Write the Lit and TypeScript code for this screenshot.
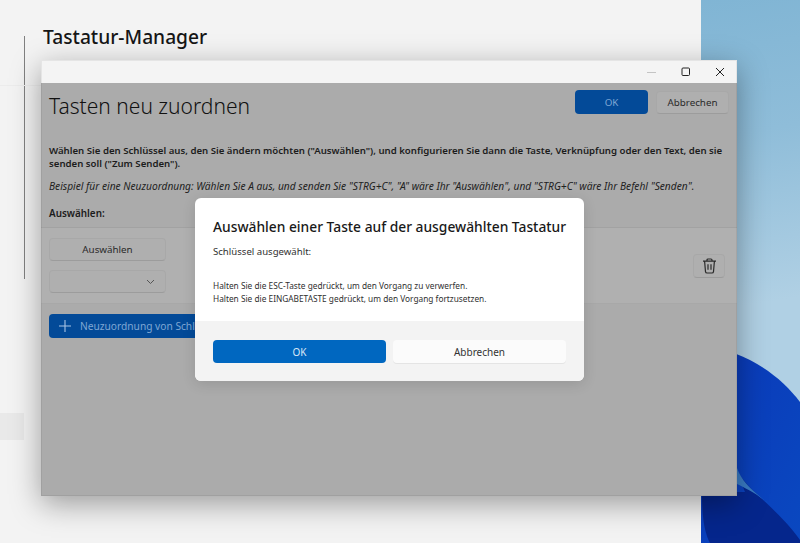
import { LitElement, html, css, svg } from "lit";
import { customElement } from "lit/decorators.js";

@customElement("app-root")
export class AppRoot extends LitElement {
  static styles = css`
    :host { display: block; width: 800px; height: 543px; position: relative; overflow: hidden; font-family: "Noto Sans", "Open Sans", sans-serif; color: #1b1b1b; }
    .wallpaper { position: absolute; inset: 0; width: 800px; height: 543px; display: block; }
    .settings { position: absolute; left: 0; top: 0; width: 701px; height: 543px; background: #f3f3f3; }
    .settings h2 { position: absolute; left: 43px; top: 23px; margin: 0; font-size: 19.2px; line-height: 28px; font-weight: 500; color: #161616; white-space: nowrap; }
    .rail { position: absolute; left: 23.5px; top: 36px; width: 1.5px; height: 243px; background: #808080; }
    .sep { position: absolute; left: 0; top: 85px; width: 42px; height: 1px; background: #ececec; }
    .sel { position: absolute; left: 0; top: 413px; width: 24px; height: 27px; background: #e9e9e9; }
    .window { position: absolute; left: 41px; top: 60px; width: 696px; height: 436px; display: flex; flex-direction: column; background: #ababab; box-shadow: 0 8px 28px rgba(0,0,0,.36); outline: 1px solid rgba(0,0,0,.06); outline-offset: -1px; }
    .titlebar { height: 23px; flex: none; background: #f4f4f4; display: flex; justify-content: flex-end; align-items: center; }
    .cap { width: 34px; height: 23px; display: flex; align-items: center; justify-content: center; }
    .cap svg { display: block; }
    .content { flex: 1; display: flex; flex-direction: column; min-height: 0; }
    .head { display: flex; justify-content: space-between; align-items: flex-start; padding: 7px 8px 0 8px; }
    h1 { margin: 0; font-size: 21px; line-height: 32px; font-weight: 300; color: #111; white-space: nowrap; }
    .head-btns { display: flex; gap: 8px; align-items: center; }
    .btn { box-sizing: border-box; display: flex; align-items: center; justify-content: center; border-radius: 4px; font-size: 9.8px; white-space: nowrap; }
    .gray { background: #afafaf; color: #2a2a2a; border: 1px solid #a8a8a8; border-bottom-color: #9c9c9c; }
    .navy { background: #034a98; color: #7fa7d4; }
    .head-btns .btn { width: 73px; height: 24px; }
    .head-btns .gray { height: 23px; }
    .intro { margin: 22px 8px 0; font-size: 9.63px; line-height: 13px; font-weight: 600; color: #1c1c1c; }
    .example { margin: 9px 8px 0; font-size: 10.2px; line-height: 14px; font-style: italic; color: #222; white-space: nowrap; }
    .label { margin: 13px 8px 0; font-size: 9.9px; line-height: 14px; font-weight: 600; color: #1c1c1c; }
    .row { margin-top: 7px; height: 77px; flex: none; box-sizing: border-box; background: #b0b0b0; border-top: 1px solid #a2a2a2; border-bottom: 1px solid #a8a8a8; display: flex; justify-content: space-between; align-items: center; padding: 0 12px 0 8px; }
    .col { display: flex; flex-direction: column; gap: 9px; }
    .col .btn { width: 117px; height: 23px; }
    .dd { justify-content: flex-end; padding-right: 10px; }
    .trash { width: 32px; height: 24px; }
    .add { margin: 10px 0 0 8px; width: 240px; height: 24px; justify-content: flex-start; padding-left: 9px; gap: 8px; font-size: 10.2px; }
    .scrim { position: absolute; left: 195px; top: 198px; width: 389px; height: 183px; border-radius: 6px; overflow: hidden; background: #fff; display: flex; flex-direction: column; box-shadow: 0 3px 14px rgba(0,0,0,.12); }
    .d-body { flex: 1; padding: 18px 18px 0; }
    .d-title { margin: 0; font-size: 13.8px; line-height: 22px; font-weight: 500; color: #191919; white-space: nowrap; }
    .d-sub { margin: 7px 0 0; font-size: 9.6px; line-height: 14px; color: #303030; }
    .d-note { margin: 21px 0 0; font-size: 8.3px; line-height: 12.5px; color: #303030; white-space: nowrap; }
    .d-foot { height: 60px; flex: none; box-sizing: border-box; background: #f3f3f3; padding: 19px 18px 0; display: flex; gap: 7px; align-items: flex-start; }
    .d-foot .btn { flex: 1; height: 23px; font-size: 10px; }
    .primary { background: #0067c0; color: #d8e8f6; }
    .cancel { background: #fbfbfb; color: #333; box-shadow: 0 1px 0 #e4e4e4; }
  `;

  private wallpaper() {
    return svg`
      <defs>
        <linearGradient id="sky" x1="0" y1="0" x2="0.25" y2="1">
          <stop offset="0" stop-color="#74aed0"/>
          <stop offset="0.45" stop-color="#8fbdd9"/>
          <stop offset="0.75" stop-color="#b0d0e4"/>
        </linearGradient>
        <linearGradient id="petal" x1="0" y1="0" x2="1" y2="1">
          <stop offset="0" stop-color="#0a38b8"/>
          <stop offset="1" stop-color="#0a48c0"/>
        </linearGradient>
      </defs>
      <rect width="800" height="543" fill="url(#sky)"/>
      <path d="M700 345 C745 350 780 375 800 402 V543 H700 Z" fill="url(#petal)"/>
      <path d="M735 466 C745 490 775 505 800 540 V543 H710 C703 530 702 510 702 492 H745 Z" fill="#05268c"/>
      <path d="M737 468 C742 482 752 490 770 505 C758 494 745 488 737 484 Z" fill="#3a7cc4"/>
    `;
  }

  render() {
    return html`
      <svg class="wallpaper" viewBox="0 0 800 543">${this.wallpaper()}</svg>
      <div class="settings">
        <h2>Tastatur-Manager</h2>
        <div class="rail"></div>
        <div class="sep"></div>
        <div class="sel"></div>
      </div>
      <div class="window">
        <div class="titlebar">
          <div class="cap"><svg width="10" height="10" viewBox="0 0 10 10"><path d="M0 5.5H9" stroke="#c4c4c4" stroke-width="1"/></svg></div>
          <div class="cap"><svg width="10" height="10" viewBox="0 0 10 10"><rect x="1" y="1" width="7.5" height="7.5" rx="1" fill="none" stroke="#222" stroke-width="1"/></svg></div>
          <div class="cap"><svg width="10" height="10" viewBox="0 0 10 10"><path d="M1 1L9 9M9 1L1 9" stroke="#222" stroke-width="1"/></svg></div>
        </div>
        <div class="content">
          <div class="head">
            <h1>Tasten neu zuordnen</h1>
            <div class="head-btns">
              <div class="btn navy">OK</div>
              <div class="btn gray">Abbrechen</div>
            </div>
          </div>
          <p class="intro">Wählen Sie den Schlüssel aus, den Sie ändern möchten ("Auswählen"), und konfigurieren Sie dann die Taste, Verknüpfung oder den Text, den sie senden soll ("Zum Senden").</p>
          <p class="example">Beispiel für eine Neuzuordnung: Wählen Sie A aus, und senden Sie "STRG+C", "A" wäre Ihr "Auswählen", und "STRG+C" wäre Ihr Befehl "Senden".</p>
          <p class="label">Auswählen:</p>
          <div class="row">
            <div class="col">
              <div class="btn gray">Auswählen</div>
              <div class="btn gray dd"><svg width="9" height="6" viewBox="0 0 9 6"><path d="M1 1L4.5 4.5L8 1" fill="none" stroke="#555" stroke-width="1"/></svg></div>
            </div>
            <div class="btn gray trash">
              <svg width="15" height="16" viewBox="0 0 15 16"><path d="M1 3.2H14M5 3V2A1 1 0 0 1 6 1H9A1 1 0 0 1 10 2V3M2.6 3.2L3.5 13.6A1.6 1.6 0 0 0 5.1 15H9.9A1.6 1.6 0 0 0 11.5 13.6L12.4 3.2M6 6.2V11.8M9 6.2V11.8" fill="none" stroke="#2a2a2a" stroke-width="1.2"/></svg>
            </div>
          </div>
          <div class="btn navy add">
            <svg width="14" height="14" viewBox="0 0 14 14"><path d="M7 1V13M1 7H13" stroke="#a9c4e4" stroke-width="1.1"/></svg>
            <span>Neuzuordnung von Schlüssel hinzufügen</span>
          </div>
        </div>
      </div>
      <div class="scrim">
        <div class="d-body">
          <p class="d-title">Auswählen einer Taste auf der ausgewählten Tastatur</p>
          <p class="d-sub">Schlüssel ausgewählt:</p>
          <p class="d-note">Halten Sie die ESC-Taste gedrückt, um den Vorgang zu verwerfen.<br>Halten Sie die EINGABETASTE gedrückt, um den Vorgang fortzusetzen.</p>
        </div>
        <div class="d-foot">
          <div class="btn primary">OK</div>
          <div class="btn cancel">Abbrechen</div>
        </div>
      </div>
    `;
  }
}
